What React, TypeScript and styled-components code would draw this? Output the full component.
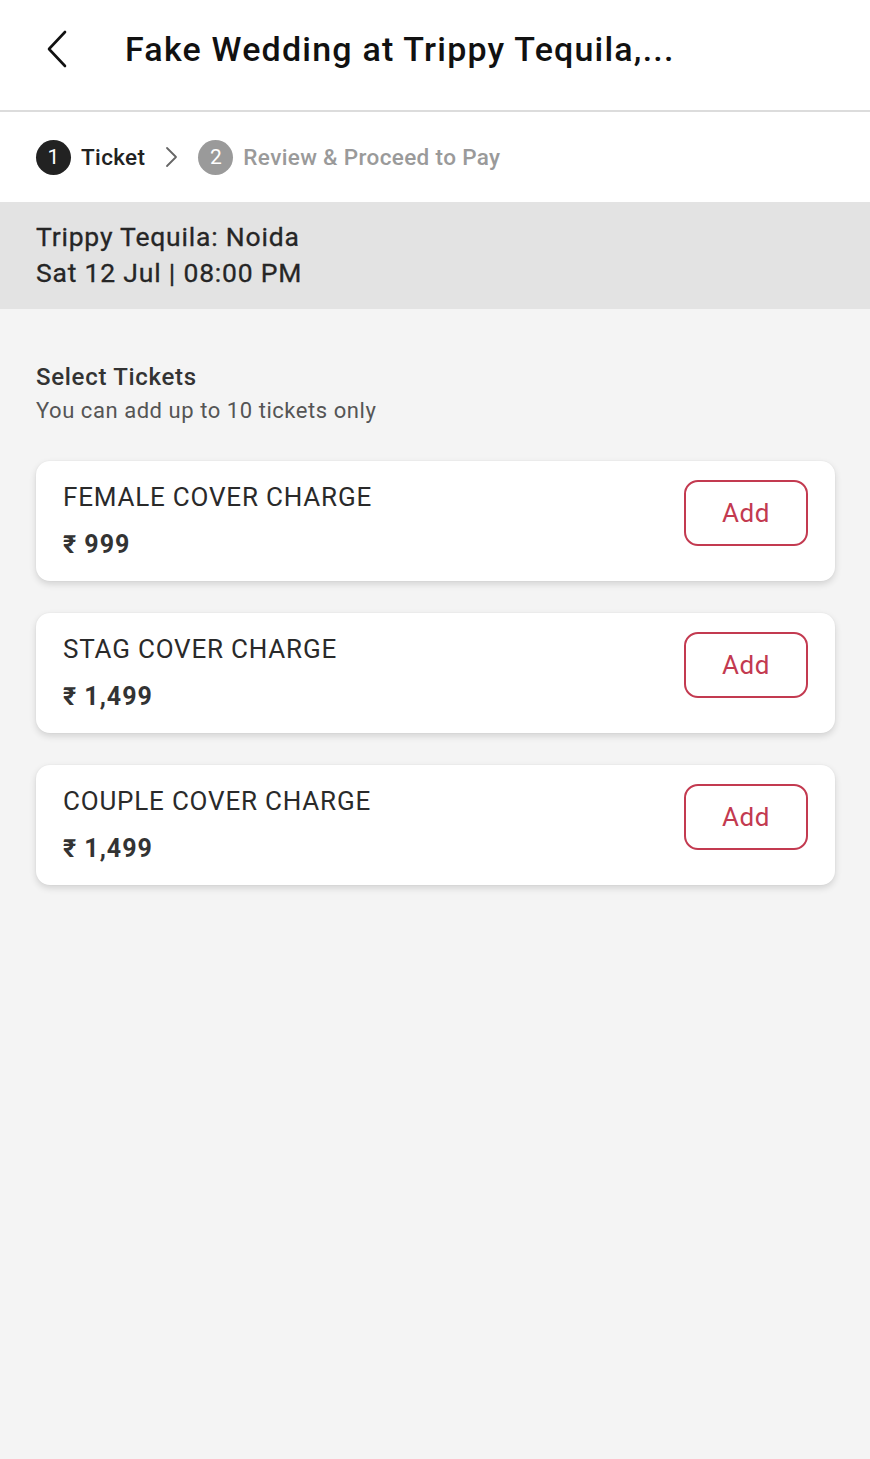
import React from "react";
import styled, { createGlobalStyle } from "styled-components";

const Global = createGlobalStyle`
  html, body { margin: 0; padding: 0; background: #f4f4f4; }
  body { font-family: Roboto, "Noto Sans", "Liberation Sans", sans-serif; -webkit-font-smoothing: antialiased; }
  * { box-sizing: border-box; }
`;

const Page = styled.div`
  width: 870px;
  min-height: 1459px;
  background: #f4f4f4;
  display: flex;
  flex-direction: column;
`;

const Header = styled.header`
  height: 112px;
  background: #fff;
  border-bottom: 2px solid #dcdcdc;
  display: flex;
  align-items: center;
  padding-left: 44px;
  padding-bottom: 12px;
`;

const BackButton = styled.button`
  background: none;
  border: none;
  padding: 0;
  width: 26px;
  height: 38px;
  display: flex;
  align-items: center;
  justify-content: center;
  margin-right: 55px;
  cursor: pointer;
`;

const Title = styled.h1`
  margin: 0;
  font-size: 34px;
  font-weight: 500;
  color: #111;
  letter-spacing: 1.2px;
  white-space: nowrap;
`;

const Steps = styled.nav`
  height: 90px;
  background: #fff;
  display: flex;
  align-items: center;
  padding-left: 36px;
`;

const StepCircle = styled.span<{ $active?: boolean }>`
  width: 35px;
  height: 35px;
  border-radius: 50%;
  background: ${(p) => (p.$active ? "#222" : "#9a9a9a")};
  color: #fff;
  font-size: 21px;
  display: flex;
  align-items: center;
  justify-content: center;
  margin-right: 10px;
`;

const StepLabel = styled.span<{ $active?: boolean }>`
  font-size: 22.5px;
  font-weight: 500;
  letter-spacing: 0.35px;
  color: ${(p) => (p.$active ? "#222" : "#9a9a9a")};
`;

const Chevron = styled.span`
  display: flex;
  align-items: center;
  margin: 0 19px 0 19px;
`;

const Venue = styled.section`
  background: #e3e3e3;
  padding: 17px 36px 18px;
  display: flex;
  flex-direction: column;
`;

const VenueLine = styled.div`
  font-size: 26.5px;
  line-height: 36px;
  font-weight: 400;
  letter-spacing: 0.8px;
  color: #262626;
  -webkit-text-stroke: 0.3px #262626;
`;

const Content = styled.main`
  padding: 53px 35px 0 36px;
  display: flex;
  flex-direction: column;
`;

const SectionTitle = styled.h2`
  margin: 0;
  font-size: 24px;
  line-height: 30px;
  font-weight: 500;
  letter-spacing: 0.7px;
  color: #333;
`;

const SectionSub = styled.p`
  margin: 5px 0 0;
  font-size: 22px;
  line-height: 28px;
  letter-spacing: 0.55px;
  color: #555;
`;

const CardList = styled.div`
  margin-top: 36px;
  display: flex;
  flex-direction: column;
  gap: 32px;
`;

const Card = styled.div`
  height: 120px;
  background: #fff;
  border-radius: 14px;
  box-shadow: 0 3px 7px rgba(0, 0, 0, 0.14), 0 0 2px rgba(0, 0, 0, 0.05);
  display: flex;
  justify-content: space-between;
  padding: 20px 27px 20px 27px;
`;

const CardInfo = styled.div`
  display: flex;
  flex-direction: column;
  gap: 16px;
`;

const CardName = styled.div`
  font-size: 26px;
  line-height: 32px;
  color: #2a2a2a;
  letter-spacing: 0.8px;
`;

const Price = styled.div`
  font-size: 25px;
  line-height: 32px;
  font-weight: 700;
  letter-spacing: 1px;
  color: #333;
`;

const AddButton = styled.button`
  width: 124px;
  height: 66px;
  margin-top: -1px;
  border: 2px solid #c33a50;
  border-radius: 14px;
  background: #fff;
  color: #c33a50;
  font-family: inherit;
  font-size: 26px;
  letter-spacing: 0.5px;
  cursor: pointer;
`;

const tickets = [
  { name: "FEMALE COVER CHARGE", price: "₹ 999" },
  { name: "STAG COVER CHARGE", price: "₹ 1,499" },
  { name: "COUPLE COVER CHARGE", price: "₹ 1,499" },
];

export default function App() {
  return (
    <Page>
      <Global />
      <Header>
        <BackButton aria-label="Back">
          <svg width="24" height="38" viewBox="0 0 24 38" fill="none">
            <path d="M20 2 L4 19 L20 36" stroke="#111" strokeWidth="2.6" strokeLinecap="round" strokeLinejoin="round" />
          </svg>
        </BackButton>
        <Title>Fake Wedding at Trippy Tequila,...</Title>
      </Header>
      <Steps>
        <StepCircle $active>1</StepCircle>
        <StepLabel $active>Ticket</StepLabel>
        <Chevron>
          <svg width="15" height="22" viewBox="0 0 15 22" fill="none">
            <path d="M3 2 L12 11 L3 20" stroke="#666" strokeWidth="1.8" strokeLinecap="round" strokeLinejoin="round" />
          </svg>
        </Chevron>
        <StepCircle>2</StepCircle>
        <StepLabel>Review &amp; Proceed to Pay</StepLabel>
      </Steps>
      <Venue>
        <VenueLine>Trippy Tequila: Noida</VenueLine>
        <VenueLine>Sat 12 Jul | 08:00 PM</VenueLine>
      </Venue>
      <Content>
        <SectionTitle>Select Tickets</SectionTitle>
        <SectionSub>You can add up to 10 tickets only</SectionSub>
        <CardList>
          {tickets.map((t) => (
            <Card key={t.name}>
              <CardInfo>
                <CardName>{t.name}</CardName>
                <Price>{t.price}</Price>
              </CardInfo>
              <AddButton>Add</AddButton>
            </Card>
          ))}
        </CardList>
      </Content>
    </Page>
  );
}
